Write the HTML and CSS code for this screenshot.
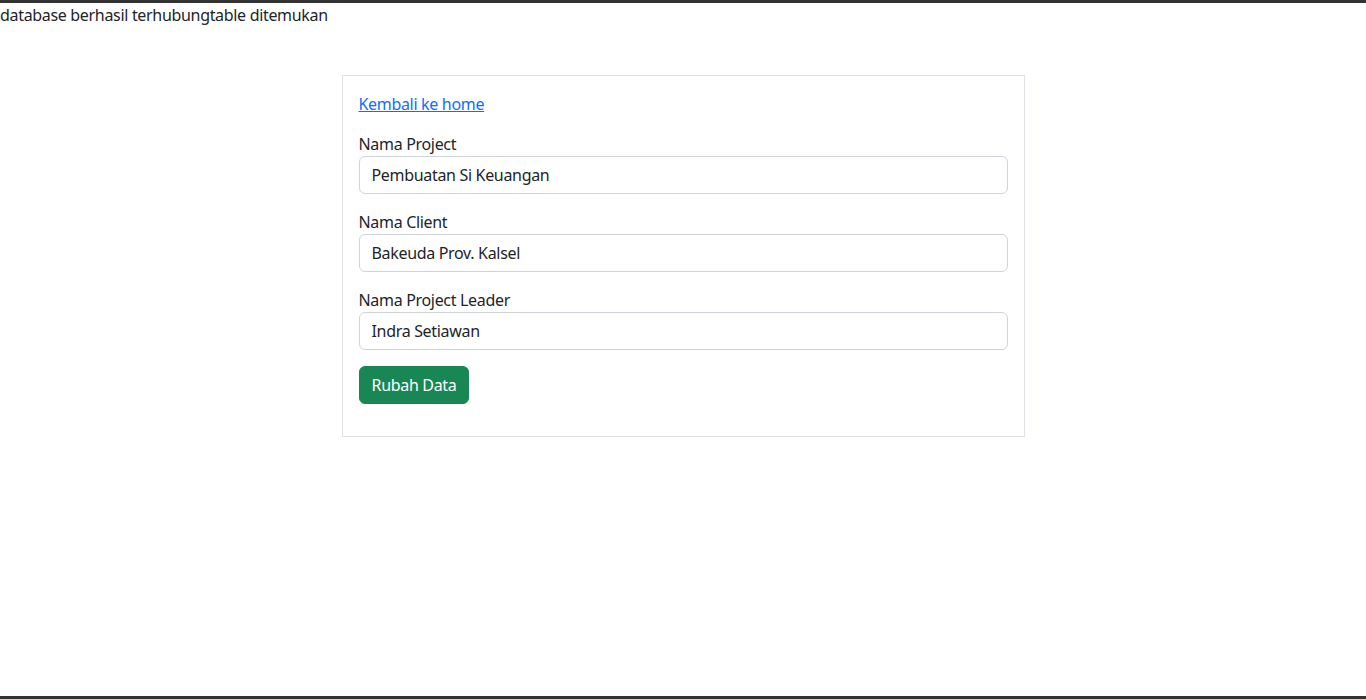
FILE: index.html
```html
<!DOCTYPE html>
<html lang="id">
<head>
<meta charset="utf-8">
<title>Rubah Data Project</title>
<link rel="stylesheet" href="styles.css">
</head>
<body>
<div class="topbar"></div>
<div class="status">database berhasil terhubungtable ditemukan</div>
<div class="card">
  <p class="back"><a href="#">Kembali ke home</a></p>
  <form class="form">
    <div class="field">
      <label class="label" for="p">Nama Project</label>
      <input class="input" id="p" type="text" value="Pembuatan Si Keuangan">
    </div>
    <div class="field">
      <label class="label" for="c">Nama Client</label>
      <input class="input" id="c" type="text" value="Bakeuda Prov. Kalsel">
    </div>
    <div class="field">
      <label class="label" for="l">Nama Project Leader</label>
      <input class="input" id="l" type="text" value="Indra Setiawan">
    </div>
    <div class="actions">
      <button class="btn" type="button">Rubah Data</button>
    </div>
  </form>
</div>
<div class="bottombar"></div>
</body>
</html>
```

FILE: styles.css
```css
* { box-sizing: border-box; }
html, body { margin: 0; padding: 0; }
body {
  font-family: "Noto Sans", "DejaVu Sans", sans-serif;
  font-size: 16px;
  line-height: 24px;
  letter-spacing: -0.32px;
  color: #212529;
  background: #fff;
}
.topbar { height: 3px; background: #333333; }
.status { height: 24px; }
.card {
  width: 683px;
  margin: 48px auto 0;
  border: 1px solid #dee2e6;
  padding: 16px;
}
.back { margin: 0 0 16px; }
.back a { color: #0d6efd; text-decoration: underline; }
.form { display: flex; flex-direction: column; gap: 16px; }
.field { display: flex; flex-direction: column; }
.label { display: block; }
.input {
  font: inherit;
  letter-spacing: inherit;
  color: #212529;
  height: 38px;
  padding: 6px 12px;
  border: 1px solid #ced4da;
  border-radius: 6px;
  background: #fff;
  width: 100%;
}
.actions { padding-bottom: 16px; }
.btn {
  font: inherit;
  letter-spacing: inherit;
  color: #fff;
  background: #198754;
  border: 1px solid #198754;
  border-radius: 6px;
  height: 38px;
  padding: 6px 12px;
  cursor: pointer;
}
.bottombar {
  position: fixed;
  left: 0; right: 0; bottom: 0;
  height: 3px;
  background: #333333;
}
```
